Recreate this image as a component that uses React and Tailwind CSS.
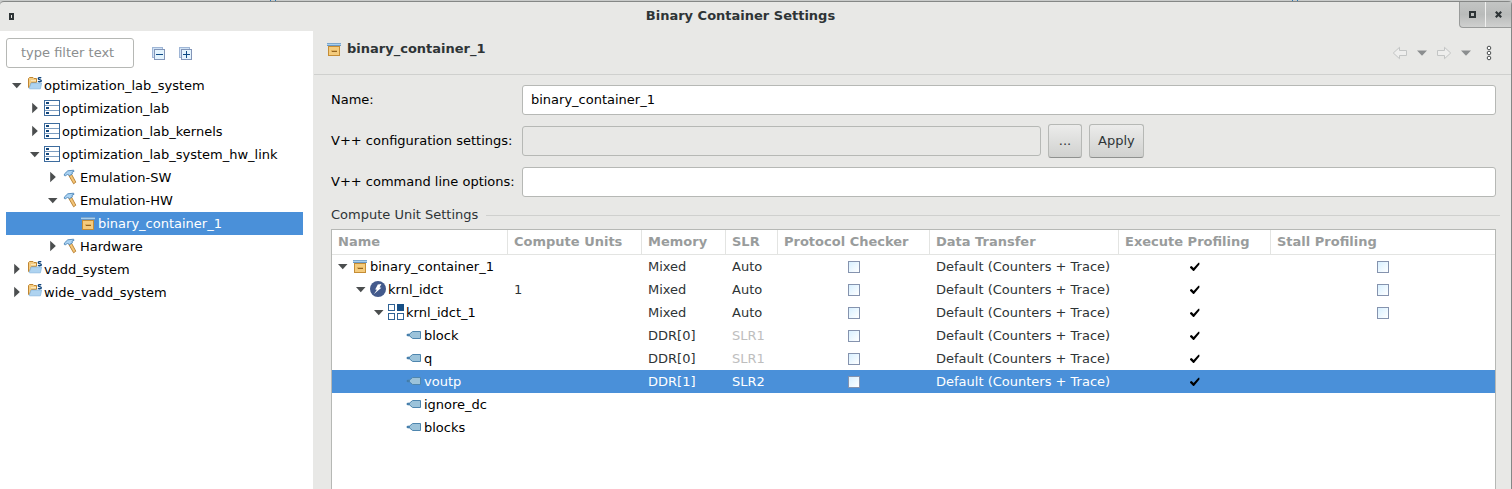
import React from "react";

function ContainerIcon() {
  return (
    <svg width="16" height="16" viewBox="0 0 16 16" shapeRendering="crispEdges" className="shrink-0" aria-hidden="true">
      <rect x="1" y="2" width="14" height="1" fill="#7ba6cd" />
      <rect x="1" y="3" width="14" height="1" fill="#a9d0ee" />
      <rect x="1" y="4" width="14" height="1" fill="#6b98c2" />
      <rect x="2" y="5" width="12" height="10" fill="#c58d35" />
      <rect x="3" y="6" width="10" height="8" fill="#f4cb7c" />
      <rect x="5" y="9" width="6" height="2" fill="#e0b05c" />
      <rect x="6" y="10" width="5" height="1" fill="#96651f" />
    </svg>
  );
}

function SystemIcon() {
  return (
    <svg width="16" height="16" viewBox="0 0 16 16" className="shrink-0" aria-hidden="true">
      <path d="M2.5 10.5V1.5L3.5 .5H7L8 1.5H10.5V5.5H5.5L3.5 10.5Z" fill="#f5cd82" stroke="#c08632" />
      <path d="M5 3.5H10" stroke="#fbe6bb" />
      <path d="M3.2 11.3L5.2 6H15.6L14.4 11.8H3.5Z" fill="#aed3f0" stroke="#8ab9e0" strokeWidth="0.8" />
      <path d="M15.2 1C14.4 0.4 12.3 0.4 12.3 1.7C12.3 2.9 15.3 2.3 15.3 3.7C15.3 4.9 13 4.9 12 4.2" fill="none" stroke="#12467c" strokeWidth="1.4" />
    </svg>
  );
}

function ProjectIcon() {
  return (
    <svg width="16" height="16" viewBox="0 0 16 16" shapeRendering="crispEdges" className="shrink-0" aria-hidden="true">
      <rect x="0.5" y="0.5" width="15" height="15" fill="#fff" stroke="#3d6c9e" />
      <path d="M1 5.5H15M1 10.5H15" stroke="#7d9dc0" />
      <path d="M2 2h3v2H2zM2 7h3v2H2zM2 12h3v2H2z" fill="#12467c" />
    </svg>
  );
}

function HammerIcon() {
  return (
    <svg width="16" height="16" viewBox="0 0 16 16" className="shrink-0" aria-hidden="true">
      <path d="M6.8 6.4L9.4 5L13.8 13.2L11.6 14.8Z" fill="#f5c678" stroke="#b47c2c" strokeWidth="0.9" />
      <path d="M2.4 6.6V5L5.8 1.8L11.6 1.2L12 2.4L10 3.2L10.4 4.8L7.4 6.8L5.6 5L3.8 6.8Z" fill="#a9d2f2" stroke="#4c84b8" strokeWidth="0.9" />
    </svg>
  );
}

function KernelIcon() {
  return (
    <svg width="16" height="16" viewBox="0 0 16 16" className="shrink-0" aria-hidden="true">
      <circle cx="8" cy="8" r="8" fill="#435a8c" />
      <path d="M7.8 3.6L11.4 3L9.6 6.4L11.4 6.8L4 13L6.9 8.8L5.2 8.4Z" fill="#fff" />
    </svg>
  );
}

function ComputeUnitIcon() {
  return (
    <svg width="16" height="16" viewBox="0 0 16 16" shapeRendering="crispEdges" className="shrink-0" aria-hidden="true">
      <path d="M.5 .5h6v6h-6zM.5 9.5h6v6h-6zM9.5 9.5h6v6h-6z" fill="#fff" stroke="#2f6295" />
      <rect x="9" y="0" width="7" height="7" fill="#164f86" />
    </svg>
  );
}

function PortIcon() {
  return (
    <svg width="16" height="16" viewBox="0 0 16 16" className="shrink-0" aria-hidden="true">
      <path d="M1 7.4L3.6 7L6.6 4.5H14.5V11.5H6.6L3.6 9L1 8.6Z" fill="#9cc3da" stroke="#4f86ae" />
      <path d="M1 8H4" stroke="#3a76a6" strokeWidth="1.4" />
    </svg>
  );
}

const icons = {
  container: ContainerIcon,
  system: SystemIcon,
  project: ProjectIcon,
  hammer: HammerIcon,
  kernel: KernelIcon,
  unit: ComputeUnitIcon,
  port: PortIcon,
};

function Expander({ state, name }) {
  if (!state) return <span className="w-4 shrink-0" />;
  const open = state === "open";
  return (
    <button type="button" aria-label={`${open ? "Collapse" : "Expand"} ${name}`} className="flex size-4 shrink-0 items-center justify-center">
      <svg width="16" height="16" viewBox="0 0 16 16" aria-hidden="true">
        <path d={open ? "M4 6H13.5L8.75 11.3Z" : "M6.2 2.8V13.2L11.8 8Z"} fill="#4b4e4f" />
      </svg>
    </button>
  );
}

const indents = ["pl-0.5", "pl-5", "pl-[38px]", "pl-14"];

function NodeLabel({ level, state, icon, name }) {
  const Icon = icons[icon];
  return (
    <div className={`flex h-[23px] items-center gap-0.5 pb-px whitespace-nowrap ${indents[level]}`}>
      <Expander state={state} name={name} />
      <Icon />
      <span className="pt-0.5">{name}</span>
    </div>
  );
}

const projectTree = [
  { level: 0, state: "open", icon: "system", name: "optimization_lab_system" },
  { level: 1, state: "closed", icon: "project", name: "optimization_lab" },
  { level: 1, state: "closed", icon: "project", name: "optimization_lab_kernels" },
  { level: 1, state: "open", icon: "project", name: "optimization_lab_system_hw_link" },
  { level: 2, state: "closed", icon: "hammer", name: "Emulation-SW" },
  { level: 2, state: "open", icon: "hammer", name: "Emulation-HW" },
  { level: 3, icon: "container", name: "binary_container_1", selected: true },
  { level: 2, state: "closed", icon: "hammer", name: "Hardware" },
  { level: 0, state: "closed", icon: "system", name: "vadd_system" },
  { level: 0, state: "closed", icon: "system", name: "wide_vadd_system" },
];

const transfer = "Default (Counters + Trace)";

const units = [
  { level: 0, state: "open", icon: "container", name: "binary_container_1", memory: "Mixed", slr: "Auto", transfer, stall: true },
  { level: 1, state: "open", icon: "kernel", name: "krnl_idct", count: "1", memory: "Mixed", slr: "Auto", transfer, stall: true },
  { level: 2, state: "open", icon: "unit", name: "krnl_idct_1", memory: "Mixed", slr: "Auto", transfer, stall: true },
  { level: 3, icon: "port", name: "block", memory: "DDR[0]", slr: "SLR1", dim: true, transfer },
  { level: 3, icon: "port", name: "q", memory: "DDR[0]", slr: "SLR1", dim: true, transfer },
  { level: 3, icon: "port", name: "voutp", memory: "DDR[1]", slr: "SLR2", transfer, selected: true },
  { level: 3, icon: "port", name: "ignore_dc" },
  { level: 3, icon: "port", name: "blocks" },
];

const columns = [
  { title: "Name", width: "w-[176px]" },
  { title: "Compute Units", width: "w-[134px]" },
  { title: "Memory", width: "w-[84px]" },
  { title: "SLR", width: "w-[52px]" },
  { title: "Protocol Checker", width: "w-[152px]" },
  { title: "Data Transfer", width: "w-[189px]" },
  { title: "Execute Profiling", width: "w-[152px]" },
  { title: "Stall Profiling", width: "" },
];

function Box({ label }) {
  return (
    <div className="flex justify-center pt-px">
      <input
        type="checkbox"
        aria-label={label}
        className="size-3 appearance-none border border-[#8593ae] bg-linear-to-br from-[#d8f0ff] to-white"
      />
    </div>
  );
}

function Tick({ label }) {
  return (
    <div className="grid place-items-center pt-px">
      <input type="checkbox" defaultChecked aria-label={label} className="col-start-1 row-start-1 size-3 appearance-none" />
      <svg width="12" height="12" viewBox="0 0 12 12" className="pointer-events-none col-start-1 row-start-1" aria-hidden="true">
        <path d="M1 5.8L2.6 5L4.6 7L9.4 1.8H10.4V3.6L5 10H4.2L1 6.8Z" fill="#000" />
      </svg>
    </div>
  );
}

function StackIcon({ plus }) {
  return (
    <svg width="14" height="14" viewBox="0 0 14 14" shapeRendering="crispEdges" aria-hidden="true">
      <rect x="0.5" y="0.5" width="10" height="10" fill="#cfe2f5" stroke="#9fb6d6" />
      <rect x="2.5" y="2.5" width="10" height="10" fill="#e3f3fd" stroke="#8295b8" />
      <path d={plus ? "M4 7.5H11M7.5 4V11" : "M4 7.5H11"} stroke="#0d4a85" />
    </svg>
  );
}

function NavArrow({ forward }) {
  return (
    <svg width="16" height="14" viewBox="0 0 16 14" className={forward ? "-scale-x-100" : ""} aria-hidden="true">
      <path d="M1.3 7L7.5 1.3V4.5H14.5V9.5H7.5V12.7Z" fill="#eeeeed" stroke="#c3c5c5" strokeLinejoin="round" />
    </svg>
  );
}

function MenuArrow() {
  return (
    <svg width="10" height="6" viewBox="0 0 10 6" aria-hidden="true">
      <path d="M0 .5H10L5 5.8Z" fill="#8b8e8f" />
    </svg>
  );
}

function TitleBar() {
  return (
    <header className="flex h-[29px] items-start">
      <button type="button" aria-label="Window menu" className="flex h-7 w-[22px] items-center justify-center">
        <svg width="5" height="7" viewBox="0 0 5 7" shapeRendering="crispEdges" aria-hidden="true">
          <rect width="5" height="7" fill="#2e3436" />
          <rect x="2" y="2" width="1" height="3" fill="#e8e8e6" />
        </svg>
      </button>
      <h1 className="flex h-7 flex-1 items-center justify-center font-bold">Binary Container Settings</h1>
      <div className="flex h-[26px] w-[52px] divide-x divide-[#f0f0ef] rounded-bl border-b border-l border-[#999b9a] bg-linear-to-b from-[#c3c5c4] via-[#b9bbba] to-[#cfd0cf]">
        <button type="button" aria-label="Maximize" className="flex flex-1 items-center justify-center">
          <svg width="7" height="7" viewBox="0 0 7 7" shapeRendering="crispEdges" aria-hidden="true">
            <path d="M0 0H7V7H0ZM2 2V5H5V2Z" fillRule="evenodd" fill="#2e3436" />
          </svg>
        </button>
        <button type="button" aria-label="Close" className="flex flex-1 items-center justify-center">
          <svg width="7" height="7" viewBox="0 0 7 7" aria-hidden="true">
            <path d="M.8 .8L6.2 6.2M6.2 .8L.8 6.2" stroke="#2e3436" strokeWidth="2.2" />
          </svg>
        </button>
      </div>
    </header>
  );
}

function Sidebar() {
  return (
    <nav aria-label="Projects" className="w-[313px] shrink-0 bg-white pt-[7px] pr-2.5 pl-1.5">
      <div className="flex h-[30px] items-center">
        <input
          type="text"
          aria-label="Filter"
          placeholder="type filter text"
          className="h-[30px] w-32 rounded-[3px] border border-[#b6b8b5] px-3.5 pb-0.5 placeholder:text-[#8b8e8f]"
        />
        <button type="button" aria-label="Collapse all" className="ml-[18px] pt-0.5">
          <StackIcon />
        </button>
        <button type="button" aria-label="Expand all" className="ml-[13px] pt-0.5">
          <StackIcon plus />
        </button>
      </div>
      <ul role="tree" className="pt-1.5">
        {projectTree.map((node) => (
          <li
            key={node.name}
            role="treeitem"
            aria-level={node.level + 1}
            aria-selected={!!node.selected}
            className={node.selected ? "bg-[#4a90d9] text-white" : "text-black"}
          >
            <NodeLabel {...node} />
          </li>
        ))}
      </ul>
    </nav>
  );
}

function UnitTable() {
  return (
    <div className="flex-1 border border-b-0 border-[#b6b8b5] bg-white">
      <table className="w-full table-fixed border-separate border-spacing-0 text-left">
        <thead>
          <tr className="h-[25px]">
            {columns.map((c) => (
              <th
                key={c.title}
                scope="col"
                className={`border-r border-b border-[#e3e4e2] p-0 pl-1.5 font-bold whitespace-nowrap text-[#999c9c] last:border-r-0 ${c.width}`}
              >
                {c.title}
              </th>
            ))}
          </tr>
        </thead>
        <tbody>
          {units.map((u) => (
            <tr key={u.name} className={`h-[23px] whitespace-nowrap ${u.selected ? "bg-[#4a90d9] text-white" : ""}`}>
              <td className={`p-0 ${u.selected ? "" : "text-black"}`}>
                <NodeLabel {...u} />
              </td>
              <td className="p-0 pt-px pl-1.5">{u.count}</td>
              <td className="p-0 pt-px pl-1.5">{u.memory}</td>
              <td className={`p-0 pt-px pl-1.5 ${u.dim ? "text-[#bebebe]" : ""}`}>{u.slr}</td>
              <td className="p-0">{u.memory && <Box label={`Protocol checker for ${u.name}`} />}</td>
              <td className="p-0 pt-px pl-1.5">{u.transfer}</td>
              <td className="p-0">{u.memory && <Tick label={`Execute profiling for ${u.name}`} />}</td>
              <td className="p-0">{u.stall && <Box label={`Stall profiling for ${u.name}`} />}</td>
            </tr>
          ))}
        </tbody>
      </table>
    </div>
  );
}

const field = "h-[30px] min-w-0 rounded-[3px] border border-[#b6b8b5] px-2 text-black";
const pushButton =
  "h-[34px] shrink-0 rounded-[3px] border border-[#b6b8b5] border-b-[#8f918f] bg-linear-to-b from-[#ececeb] to-[#d0d1cf]";

export default function App() {
  return (
    <div className="flex min-h-screen flex-col bg-[#c9cbca] font-['DejaVu_Sans',sans-serif] text-[13px] leading-4 text-[#2e3436]">
      <div className="flex h-px justify-between pr-[214px] pl-[270px]">
        <span className="w-1.5 border-x border-[#2a7ab8]" />
        <span className="w-1.5 border-x border-[#2a7ab8]" />
      </div>
      <div className="flex flex-1 flex-col rounded-t border-t border-r border-[#858786] bg-[#e8e8e6]">
        <TitleBar />
        <div className="flex flex-1">
          <Sidebar />
          <main className="flex min-w-0 flex-1 flex-col">
            <div className="ml-px flex h-11 items-start justify-between border-b border-[#cfd0ce] pr-[19px] pl-3">
              <div className="flex h-9 items-center gap-[5px]">
                <ContainerIcon />
                <h2 className="font-bold">binary_container_1</h2>
              </div>
              <div className="flex h-11 items-center gap-[9px]">
                <button type="button" aria-label="Back" disabled>
                  <NavArrow />
                </button>
                <button type="button" aria-label="Back history">
                  <MenuArrow />
                </button>
                <button type="button" aria-label="Forward" disabled>
                  <NavArrow forward />
                </button>
                <button type="button" aria-label="Forward history">
                  <MenuArrow />
                </button>
                <button type="button" aria-label="View menu" className="ml-1.5">
                  <svg width="6" height="16" viewBox="0 0 6 16" fill="#fff" stroke="#4b4e4f" aria-hidden="true">
                    <circle cx="3" cy="3" r="1.8" />
                    <circle cx="3" cy="8" r="1.8" />
                    <circle cx="3" cy="13" r="1.8" />
                  </svg>
                </button>
              </div>
            </div>
            <form className="flex flex-1 flex-col pr-[15px] pl-[18px]">
              <div className="grid grid-cols-[191px_minmax(0,1fr)] items-center pt-1 text-black">
                <label htmlFor="name">Name:</label>
                <div className="flex h-[41px] items-center">
                  <input id="name" type="text" defaultValue="binary_container_1" className={`${field} flex-1 bg-white`} />
                </div>
                <label htmlFor="config">V++ configuration settings:</label>
                <div className="flex h-[41px] items-center gap-[7px]">
                  <input id="config" type="text" disabled className={`${field} w-[519px]`} />
                  <button type="button" aria-label="Browse" className={`${pushButton} w-[34px] text-[#2e3436]`}>
                    ...
                  </button>
                  <button type="button" className={`${pushButton} px-2 text-[#2e3436]`}>
                    Apply
                  </button>
                </div>
                <label htmlFor="options">V++ command line options:</label>
                <div className="flex h-[41px] items-center">
                  <input id="options" type="text" className={`${field} flex-1 bg-white`} />
                </div>
              </div>
              <div className="-mr-1 flex h-[27px] items-center gap-2 pb-px">
                <h3>Compute Unit Settings</h3>
                <span className="h-px flex-1 bg-[#cfd0ce]" />
              </div>
              <UnitTable />
            </form>
          </main>
        </div>
      </div>
    </div>
  );
}
